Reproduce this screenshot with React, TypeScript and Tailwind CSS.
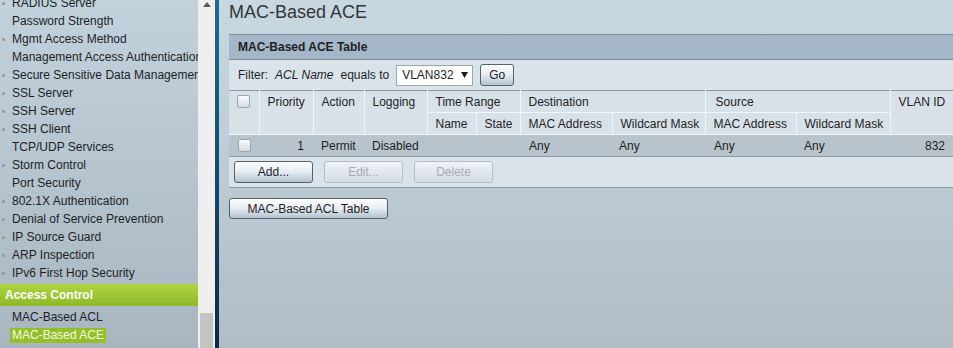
import React from "react";

const navItems: [string, boolean][] = [
  ["RADIUS Server", true],
  ["Password Strength", false],
  ["Mgmt Access Method", true],
  ["Management Access Authentication", false],
  ["Secure Sensitive Data Management", true],
  ["SSL Server", true],
  ["SSH Server", true],
  ["SSH Client", true],
  ["TCP/UDP Services", false],
  ["Storm Control", true],
  ["Port Security", false],
  ["802.1X Authentication", true],
  ["Denial of Service Prevention", true],
  ["IP Source Guard", true],
  ["ARP Inspection", true],
  ["IPv6 First Hop Security", true],
];

function Checkbox() {
  return (
    <div className="mx-auto h-[13px] w-[13px] rounded-[2px] border border-[#9aa5ae] bg-gradient-to-b from-[#fbfcfd] to-[#d3dae0]" />
  );
}

function Btn({
  children,
  disabled,
  className = "",
}: {
  children: React.ReactNode;
  disabled?: boolean;
  className?: string;
}) {
  return (
    <div
      className={
        "flex items-center justify-center whitespace-nowrap rounded-[3px] border " +
        (disabled
          ? "border-[#b3bec7] bg-gradient-to-b from-[#eef2f5] to-[#d6dee4] text-[#a3abb2] "
          : "border-[#54616d] bg-gradient-to-b from-[#fdfeff] via-[#e6ecf1] to-[#b3c2ce] text-[#1e2228] ") +
        className
      }
    >
      {children}
    </div>
  );
}

export default function App() {
  const th =
    "border-r border-b border-[#f2f5f7] text-left font-normal align-top pt-[4px] px-[8px] leading-[14px] whitespace-nowrap overflow-hidden";
  return (
    <div className="flex h-[348px] w-[953px] overflow-hidden font-['Liberation_Sans',Arial,sans-serif] text-[12px] text-[#1d1f26]">
      {/* Sidebar */}
      <aside className="w-[198px] shrink-0 overflow-hidden bg-gradient-to-b from-[#c2d2dc] to-[#a9b6c0]">
        <ul className="-mt-[6px]">
          {navItems.map(([label, bullet]) => (
            <li key={label} className="flex h-[18px] items-center whitespace-nowrap">
              <span className="flex w-[12px] shrink-0 items-center">
                {bullet && (
                  <span className="ml-[2px] h-[3px] w-[3px] rounded-full bg-[#8a97a1]" />
                )}
              </span>
              {label}
            </li>
          ))}
        </ul>
        <div className="mt-[2px] flex h-[22px] items-center bg-gradient-to-b from-[#afd43f] to-[#8dba2a] pl-[5px] font-bold text-white">
          Access Control
        </div>
        <ul className="mt-[2px]">
          <li className="flex h-[18px] items-center whitespace-nowrap pl-[12px]">MAC-Based ACL</li>
          <li className="flex h-[18px] items-center whitespace-nowrap pl-[10px]">
            <span className="bg-[#93bf27] px-[2px] leading-[15px] text-[#f6fae8]">MAC-Based ACE</span>
          </li>
        </ul>
      </aside>

      {/* Scrollbar */}
      <div className="flex w-[17px] shrink-0 flex-col justify-between bg-[#efefef]">
        <div className="flex justify-center pt-[2px]">
          <svg width="8" height="5" viewBox="0 0 8 5">
            <path d="M0 5 L4 0 L8 5 Z" fill="#5a5a5a" />
          </svg>
        </div>
        <div className="mx-[2px] h-[35px] bg-[#c3c3c3]" />
      </div>

      {/* Divider */}
      <div className="w-[4px] shrink-0 bg-gradient-to-b from-[#1e6b95] to-[#0b2a4b]" />

      {/* Main */}
      <main className="flex-1 overflow-hidden bg-gradient-to-b from-[#c7d8e1] via-[#bccbd4] to-[#b2bcc5] pl-[10px]">
        <h1 className="h-[34px] pt-[3px] text-[18px] leading-[18px] text-[#333638]">MAC-Based ACE</h1>

        <section className="w-[724px]">
          <div className="flex h-[26px] items-center border-y border-[#7e8f9d] bg-[#a3b7c8] pl-[9px] font-bold">
            MAC-Based ACE Table
          </div>
          <div className="flex h-[30px] items-center bg-[#dbe3ea] pl-[9px]">
            <span>Filter:</span>
            <span className="ml-[7px] italic">ACL Name</span>
            <span className="ml-[7px]">equals to</span>
            <div className="ml-[7px] flex h-[21px] w-[77px] items-center border border-[#9aa6b0] bg-white pl-[5px]">
              <span>VLAN832</span>
              <svg className="ml-[7px]" width="7" height="6" viewBox="0 0 7 6">
                <path d="M0 0 L7 0 L3.5 6 Z" fill="#1d1f26" />
              </svg>
            </div>
            <Btn className="ml-[7px] h-[22px] w-[34px]">Go</Btn>
          </div>

          <table className="w-[724px] table-fixed border-collapse border-t border-[#8c99a4] whitespace-nowrap">
            <colgroup>
              <col className="w-[30px]" />
              <col className="w-[54px]" />
              <col className="w-[51px]" />
              <col className="w-[63px]" />
              <col className="w-[49px]" />
              <col className="w-[44px]" />
              <col className="w-[92px]" />
              <col className="w-[93px]" />
              <col className="w-[91px]" />
              <col className="w-[94px]" />
              <col className="w-[63px]" />
            </colgroup>
            <thead className="bg-[#d9e1e8]">
              <tr className="h-[22px]">
                <th rowSpan={2} className={th + " px-0"}>
                  <Checkbox />
                </th>
                <th rowSpan={2} className={th}>Priority</th>
                <th rowSpan={2} className={th + " px-[7px]"}>Action</th>
                <th rowSpan={2} className={th}>Logging</th>
                <th colSpan={2} className={th}>Time Range</th>
                <th colSpan={2} className={th}>Destination</th>
                <th colSpan={2} className={th + " pl-[10px]"}>Source</th>
                <th rowSpan={2} className={th + " px-[7px] border-r-0"}>VLAN ID</th>
              </tr>
              <tr className="h-[22px]">
                <th className={th}>Name</th>
                <th className={th}>State</th>
                <th className={th}>MAC Address</th>
                <th className={th + " px-[7px]"}>Wildcard Mask</th>
                <th className={th}>MAC Address</th>
                <th className={th}>Wildcard Mask</th>
              </tr>
            </thead>
            <tbody>
              <tr className="h-[22px] border-b border-[#8e9aa4] bg-[#b8c3cc]">
                <td><Checkbox /></td>
                <td className="pr-[9px] text-right">1</td>
                <td className="pl-[8px]">Permit</td>
                <td className="pl-[8px]">Disabled</td>
                <td />
                <td />
                <td className="pl-[9px]">Any</td>
                <td className="pl-[7px]">Any</td>
                <td className="pl-[9px]">Any</td>
                <td className="pl-[8px]">Any</td>
                <td className="pr-[8px] text-right">832</td>
              </tr>
            </tbody>
          </table>

          <div className="flex h-[31px] items-center gap-[11px] border-b border-[#89949d] bg-[#dbe3ea] pl-[5px]">
            <Btn className="h-[22px] w-[79px]">Add...</Btn>
            <Btn disabled className="h-[22px] w-[79px]">Edit...</Btn>
            <Btn disabled className="h-[22px] w-[79px]">Delete</Btn>
          </div>
        </section>

        <Btn className="mt-[10px] h-[21px] w-[159px]">MAC-Based ACL Table</Btn>
      </main>
    </div>
  );
}
